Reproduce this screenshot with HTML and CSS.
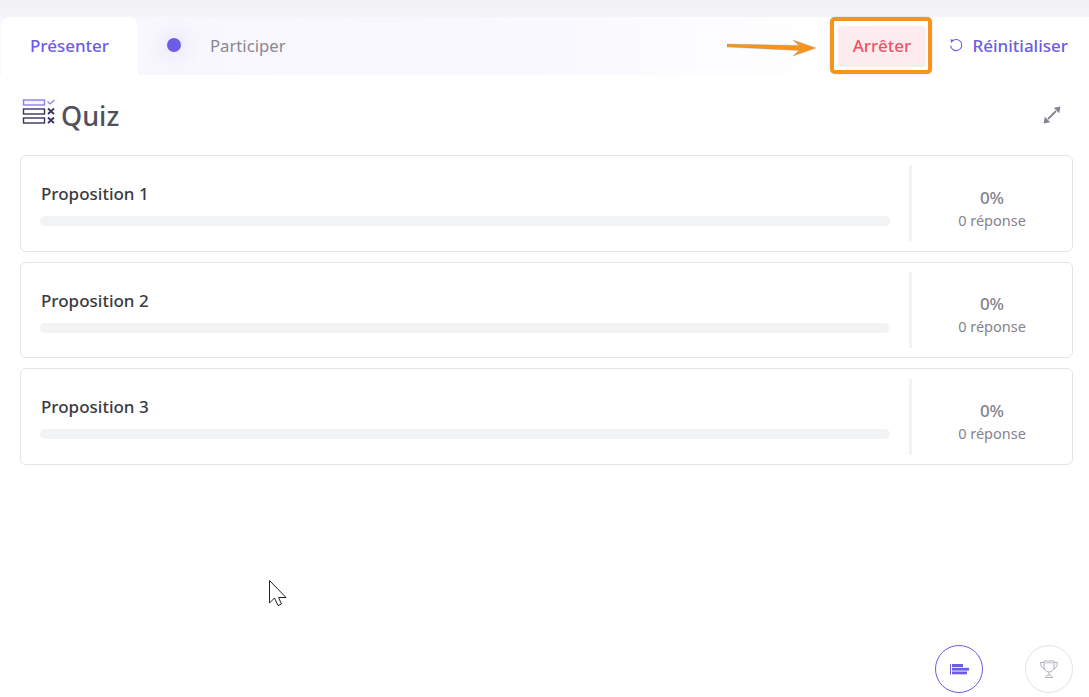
FILE: index.html
```html
<!DOCTYPE html>
<html lang="fr">
<head>
<meta charset="utf-8">
<title>Quiz</title>
<link rel="stylesheet" href="styles.css">
</head>
<body>
<div class="page">
  <header class="tabbar">
    <div class="tab tab-active">Présenter</div>
    <div class="tab tab-idle"><span class="dot"></span><span>Participer</span></div>
    <div class="actions">
      <button class="btn-stop">Arrêter</button>
      <button class="btn-reset">
        <svg class="reset-icon" width="14" height="14" viewBox="0 0 14 14" fill="none"><path d="M3.2 3.1A5.6 5.6 0 1 1 1.6 7.6" stroke="#6c5ce7" stroke-width="1.1"/><path d="M1.6 1.2L5.2 1.9L2 4.9Z" fill="#6c5ce7"/></svg>
        Réinitialiser
      </button>
    </div>
  </header>
  <main class="content">
    <div class="title-row">
      <svg class="quiz-icon" width="33" height="26" viewBox="0 0 33 26" fill="none">
        <rect x="1.5" y="1" width="21" height="5" fill="#f6f5fe" stroke="#8d7ff0" stroke-width="1.4"/>
        <rect x="1.5" y="10" width="21" height="5" stroke="#38355f" stroke-width="1.4"/>
        <rect x="1.5" y="19" width="21" height="5" stroke="#38355f" stroke-width="1.4"/>
        <path d="M25.500 2.500L28 5L32.500 1" stroke="#8d7ff0" stroke-width="1.2"/>
        <path d="M26 9.500L32 15M32 9.500L26 15M26 18.500L32 24M32 18.500L26 24" stroke="#38355f" stroke-width="1.800"/>
      </svg>
      <h1>Quiz</h1>
      <svg class="expand" width="18" height="18" viewBox="0 0 18 18" fill="#85838f"><path d="M17.500 .5L10.800 1.800L16.200 7.200Z"/><path d="M.5 17.500L1.800 10.800L7.200 16.200Z"/><path d="M13 5L5 13" stroke="#85838f" stroke-width="1.800"/></svg>
    </div>
    <section class="list">
      <article class="card">
        <div class="card-main"><div class="label">Proposition 1</div><div class="bar"></div></div>
        <div class="card-stat"><div class="pct">0%</div><div class="count">0 réponse</div></div>
      </article>
      <article class="card">
        <div class="card-main"><div class="label">Proposition 2</div><div class="bar"></div></div>
        <div class="card-stat"><div class="pct">0%</div><div class="count">0 réponse</div></div>
      </article>
      <article class="card">
        <div class="card-main"><div class="label">Proposition 3</div><div class="bar"></div></div>
        <div class="card-stat"><div class="pct">0%</div><div class="count">0 réponse</div></div>
      </article>
    </section>
  </main>
  <footer class="bottom">
    <div class="round round-active">
      <svg class="bars-icon" width="19" height="11" viewBox="0 0 19 11"><rect x="0" y="0" width="1" height="10.500" fill="#6c5ce7"/><rect x="2" y="0" width="11" height="3" fill="#6c5ce7"/><rect x="2" y="3.800" width="17" height="2.800" fill="#6c5ce7"/><rect x="2" y="7.500" width="15" height="2.800" fill="#6c5ce7"/></svg>
    </div>
    <div class="round">
      <svg width="20" height="20" viewBox="0 0 20 20" fill="none" stroke="#b5b0ba" stroke-width="1"><path d="M5 2H15V8C15 11 12.500 13 10 13C7.500 13 5 11 5 8Z"/><path d="M5 3.500H1.500C1.500 7 3 9.500 6 10M15 3.500H18.500C18.500 7 17 9.500 14 10"/><path d="M10 13V16"/><path d="M6.500 18.500C7 16.800 8.500 16 10 16C11.500 16 13 16.800 13.500 18.500Z"/><path d="M5 2.500H15V4.500H5Z" fill="#d8d5dc" stroke="none"/></svg>
    </div>
  </footer>

  <div class="highlight"></div>
  <svg class="arrow" width="92" height="20" viewBox="0 0 92 20"><path d="M0 5L72 6.500L66 1L89 9L66 17L72 11.500L0 8Z" fill="#f7941e" stroke="#8a8a8a" stroke-width=".3"/></svg>
  <svg class="cursor" width="20" height="28" viewBox="0 0 20 28" fill="#fff" stroke="#222" stroke-width="1"><path d="M1.500 1.500V24L6.500 19L10 26.500L13.500 25L10.500 18.500H18Z"/></svg>
</div>
</body>
</html>
```
FILE: styles.css
```css
* { box-sizing: border-box; }
html, body { margin: 0; height: 100%; }
body {
  background: #fff;
  font-family: "Noto Sans", "Open Sans", sans-serif;
  overflow: hidden;
}
.page {
  position: relative;
  width: 1089px;
  height: 697px;
  padding-top: 17px;
  background: linear-gradient(#f2f1f6, #f5f4f9 17px, #fff 17px);
  display: flex;
  flex-direction: column;
}
.tabbar {
  height: 58px;
  display: flex;
  align-items: center;
  padding-left: 1px;
  background: linear-gradient(90deg, #f8f7fd 0, #f9f8fe 50%, #fdfdff 66%, #fff 80%);
  flex: none;
}
.tab { font-size: 16.700px; height: 100%; display: flex; align-items: center; }
.tab-active {
  width: 137px;
  justify-content: center;
  background: #fff;
  color: #6c5ce7;
  font-size: 17px;
  font-weight: 500;
  border-radius: 10px 10px 0 0;
  padding-bottom: 2px;
}
.tab-idle { color: #8a8793; padding-left: 29px; gap: 29px; padding-bottom: 2px; }
.dot {
  width: 14px;
  height: 14px;
  border-radius: 50%;
  background: #6c5ce7;
  box-shadow: 0 0 18px 8px rgba(108, 92, 231, .08);
}
.actions { margin-left: auto; display: flex; align-items: center; padding-right: 20px; }
.actions button { font: inherit; font-size: 17px; font-weight: 500; border: 0; cursor: pointer; white-space: nowrap; }
.btn-stop {
  flex: none;
  width: 88px;
  height: 41px;
  border-radius: 4px;
  background: #fdecee;
  color: #ee5469;
  padding: 0 1px 1px 0;
}
.btn-reset {
  background: none;
  color: #6c5ce7;
  margin-left: 23px;
  padding: 0 1px 2px 0;
  display: flex;
  align-items: center;
  gap: 9px;
}
.content { padding: 0 16px 0 20px; flex: 1; }
.title-row { height: 80px; display: flex; align-items: center; position: relative; }
.quiz-icon { margin: -7px 0 0 2px; flex: none; }
.title-row h1 { margin: 0 0 0 6px; font-size: 27px; font-weight: 500; color: #51505c; line-height: 1; }
.expand { margin: -1px 12px 0 auto; }
.list { display: flex; flex-direction: column; gap: 10px; width: 1053px; }
.card {
  height: 96.67px;
  border: 1px solid #e3e4e9;
  border-radius: 6px;
  display: flex;
  align-items: center;
  background: #fff;
}
.card-main { flex: 1; padding: 2.400px 19px 0 19px; }
.label { font-size: 17px; font-weight: 500; color: #3a3a42; padding-left: 1px; line-height: 22px; margin-bottom: 11px; }
.bar { height: 10px; border-radius: 5px; background: #f2f3f5; }
.card-stat {
  width: 163px;
  height: 76px;
  border-left: 3px solid #f2f3f5;
  text-align: center;
  display: flex;
  flex-direction: column;
  justify-content: center;
  padding: 10px 0 0 0;
}
.pct { font-size: 17px; font-weight: 500; color: #85838f; line-height: 24px; }
.count { font-size: 14.500px; color: #85838f; line-height: 21px; }
.bottom {
  position: absolute;
  right: 16px;
  bottom: 4px;
  display: flex;
  gap: 42px;
}
.round {
  width: 48px;
  height: 48px;
  border-radius: 50%;
  border: 1px solid #e2e1e8;
  display: flex;
  align-items: center;
  justify-content: center;
}
.round-active { border-color: #6c5ce7; }
.bars-icon { margin-left: 1px; }
.highlight {
  position: absolute;
  left: 830px;
  top: 17px;
  width: 102px;
  height: 57px;
  border: 4px solid #f7941e;
  border-radius: 5px;
  box-shadow: 0 0 1px #777;
}
.arrow { position: absolute; left: 727px; top: 39px; }
.cursor { position: absolute; left: 268px; top: 579px; }
```
